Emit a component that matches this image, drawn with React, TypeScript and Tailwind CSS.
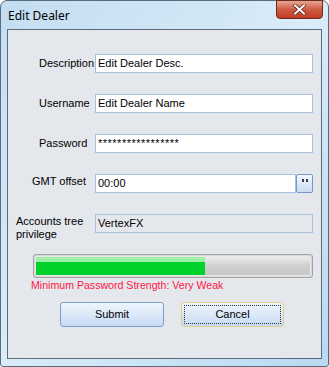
import React from "react";

const font = { fontFamily: '"Liberation Sans", Arial, sans-serif' };

function Field({ children, className = "" }: { children?: React.ReactNode; className?: string }) {
  return (
    <div className={`h-[19px] border border-[#a9bfdf] flex items-center px-[2px] text-[11px] text-black ${className}`}>
      {children}
    </div>
  );
}

export default function App() {
  return (
    <div className="w-[329px] h-[367px] bg-white" style={font}>
      <div className="w-[329px] h-[367px] rounded-t-[7px] rounded-b-[3px] border border-[#5a6b7d] bg-gradient-to-br from-[#c3ddf1] via-[#d9ecf8] to-[#b9daf2] flex flex-col px-[6px] pb-[7px]">
        {/* title bar */}
        <div className="h-[28px] flex items-start justify-between shrink-0">
          <div className="pt-[6px] pl-[1px] text-[12px] text-black" style={{ fontFamily: '"Noto Sans", "Open Sans", sans-serif' }}>
            Edit Dealer
          </div>
          <div className="w-[47px] h-[19px] mr-[-1px] mt-[-1px] rounded-b-[4px] border border-[#6b2a22] bg-gradient-to-b from-[#e8a493] via-[#cf5a42] to-[#c23b23] flex items-center justify-center">
            <svg width="13" height="11" viewBox="0 0 13 11">
              <path d="M2 1.5 L11 9.5 M11 1.5 L2 9.5" stroke="#4a1a12" strokeWidth="3.4" strokeLinecap="square" />
              <path d="M2 1.5 L11 9.5 M11 1.5 L2 9.5" stroke="#ffffff" strokeWidth="2" strokeLinecap="square" />
            </svg>
          </div>
        </div>
        {/* client */}
        <div className="flex-1 border border-[#5b6b7c] bg-[#e4e7ec] flex flex-col text-[11px] text-black">
          <div className="mt-[24px] h-[19px] flex items-center">
            <div className="w-[87px] pl-[31px]">Description</div>
            <Field className="w-[218px] bg-white">Edit Dealer Desc.</Field>
          </div>
          <div className="mt-[21px] h-[19px] flex items-center">
            <div className="w-[87px] pl-[31px]">Username</div>
            <Field className="w-[218px] bg-white">Edit Dealer Name</Field>
          </div>
          <div className="mt-[21px] h-[19px] flex items-center">
            <div className="w-[87px] pl-[31px]">Password</div>
            <Field className="w-[218px] bg-white text-[#1f3f7a] tracking-[0.5px]">*****************</Field>
          </div>
          <div className="mt-[21px] h-[19px] flex items-start">
            <div className="w-[87px] pl-[24px] leading-[13px] mt-[1px]">GMT offset</div>
            <Field className="w-[201px] bg-white">00:00</Field>
            <div className="w-[17px] h-[19px] border border-[#7897c7] rounded-[2px] bg-gradient-to-b from-[#f2f7fd] to-[#c9dcf3] flex items-start justify-center pt-[4px] gap-[2px]">
              <span className="w-[2px] h-[3px] bg-[#3a3a5a]" />
              <span className="w-[2px] h-[3px] bg-[#3a3a5a]" />
            </div>
          </div>
          <div className="mt-[21px] h-[19px] flex items-start">
            <div className="w-[87px] pl-[8px] leading-[13px] mt-[1px]">
              Accounts tree
              <br />
              privilege
            </div>
            <Field className="w-[218px] bg-[#e4e7ec]">VertexFX</Field>
          </div>
          <div className="mt-[21px] ml-[25px] w-[280px] h-[24px] rounded-[3px] border border-[#a3a3a3] bg-[#d9d9d9] p-[1px]">
            <div className="h-full rounded-[2px] bg-gradient-to-b from-[#ebebeb] via-[#cfcfcf] to-[#c8c8c8] border border-[#e8e8e8] flex">
              <div className="w-[169px] h-full flex flex-col">
                <div className="h-[5px] bg-[#9ef0a8]" />
                <div className="flex-1 bg-[#00d22b]" />
              </div>
            </div>
          </div>
          <div className="mt-[0px] ml-[23px] text-[10.6px] leading-[14px] text-[#ff1744]">Minimum Password Strength: Very Weak</div>
          <div className="mt-[10px] flex">
            <div className="ml-[52px] w-[104px] h-[25px] rounded-[3px] border border-[#7ca1cf] bg-gradient-to-b from-[#eef5fd] via-[#dbe8f8] to-[#c5daf3] flex items-center justify-center">
              Submit
            </div>
            <div className="ml-[17px] w-[103px] h-[25px] rounded-[3px] border border-[#dfcf8c] bg-gradient-to-b from-[#eef5fd] via-[#dbe8f8] to-[#c5daf3] p-[2px]">
              <div className="w-full h-full border border-dotted border-[#333] flex items-center justify-center">Cancel</div>
            </div>
          </div>
        </div>
      </div>
    </div>
  );
}
